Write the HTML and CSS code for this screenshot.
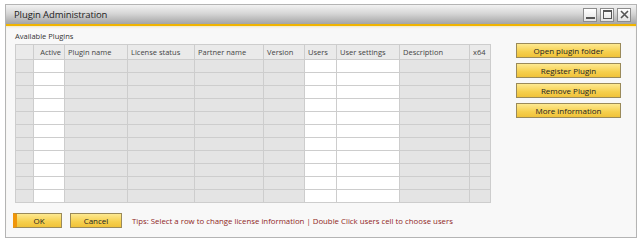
FILE: index.html
```html
<!DOCTYPE html>
<html lang="en">
<head>
  <meta charset="UTF-8">
  <title>Plugin Administration</title>
  <link rel="stylesheet" href="styles.css">
</head>
<body>
  <div class="window">
    <div class="titlebar">
      <span class="title">Plugin Administration</span>
      <div class="controls">
        <span class="ctl"><svg width="11" height="11" viewBox="0 0 11 11"><rect x="1" y="8" width="9" height="2" fill="#555"/></svg></span>
        <span class="ctl"><svg width="11" height="11" viewBox="0 0 11 11"><rect x="1.5" y="1.5" width="8" height="8" fill="none" stroke="#555"/><rect x="1" y="1" width="9" height="2" fill="#555"/></svg></span>
        <span class="ctl"><svg width="11" height="11" viewBox="0 0 11 11"><path d="M2 2 L9 9 M9 2 L2 9" stroke="#555" stroke-width="1.6"/></svg></span>
      </div>
    </div>

    <div class="content">
      <div class="main">
        <div class="plugins">
          <div class="label">Available Plugins</div>
          <table class="grid">
            <colgroup>
              <col class="c-hdr">
              <col class="c-active rw">
              <col class="c-name">
              <col class="c-lic">
              <col class="c-partner">
              <col class="c-ver">
              <col class="c-users rw">
              <col class="c-settings rw">
              <col class="c-desc">
              <col class="c-x64">
            </colgroup>
            <thead>
              <tr>
                <th></th>
                <th class="right">Active</th>
                <th>Plugin name</th>
                <th>License status</th>
                <th>Partner name</th>
                <th>Version</th>
                <th>Users</th>
                <th>User settings</th>
                <th>Description</th>
                <th>x64</th>
              </tr>
            </thead>
            <tbody>
              <tr><td></td><td></td><td></td><td></td><td></td><td></td><td></td><td></td><td></td><td></td></tr>
              <tr><td></td><td></td><td></td><td></td><td></td><td></td><td></td><td></td><td></td><td></td></tr>
              <tr><td></td><td></td><td></td><td></td><td></td><td></td><td></td><td></td><td></td><td></td></tr>
              <tr><td></td><td></td><td></td><td></td><td></td><td></td><td></td><td></td><td></td><td></td></tr>
              <tr><td></td><td></td><td></td><td></td><td></td><td></td><td></td><td></td><td></td><td></td></tr>
              <tr><td></td><td></td><td></td><td></td><td></td><td></td><td></td><td></td><td></td><td></td></tr>
              <tr><td></td><td></td><td></td><td></td><td></td><td></td><td></td><td></td><td></td><td></td></tr>
              <tr><td></td><td></td><td></td><td></td><td></td><td></td><td></td><td></td><td></td><td></td></tr>
              <tr><td></td><td></td><td></td><td></td><td></td><td></td><td></td><td></td><td></td><td></td></tr>
              <tr><td></td><td></td><td></td><td></td><td></td><td></td><td></td><td></td><td></td><td></td></tr>
              <tr><td></td><td></td><td></td><td></td><td></td><td></td><td></td><td></td><td></td><td></td></tr>
            </tbody>
          </table>
        </div>

        <div class="actions">
          <button class="btn">Open plugin folder</button>
          <button class="btn">Register Plugin</button>
          <button class="btn">Remove Plugin</button>
          <button class="btn">More information</button>
        </div>
      </div>

      <div class="footer">
        <button class="btn btn-ok">OK</button>
        <button class="btn btn-cancel">Cancel</button>
        <span class="tips">Tips: Select a row to change license information | Double Click users cell to choose users</span>
      </div>
    </div>
  </div>
</body>
</html>
```

FILE: styles.css
```css
:root {
  --line: #cdcdcd;
  --cell: #e4e4e4;
  --gold: #f0b400;
  --text: #333;
}

html, body {
  margin: 0;
  background: #fff;
}

body {
  font-family: "Open Sans", "DejaVu Sans", sans-serif;
  color: var(--text);
}

.window {
  margin: 4px 5px;
  width: 632px;
  height: 234px;
  box-sizing: border-box;
  border: 1px solid #b4b4b4;
  background: #f8f8f8;
  display: flex;
  flex-direction: column;
}

.titlebar {
  height: 19px;
  border-bottom: 2px solid var(--gold);
  background: linear-gradient(#f2f2f2, #d6d6d6 45%, #a4a4a4);
  display: flex;
  align-items: center;
  justify-content: space-between;
  padding: 0 5px 0 8px;
}

.title {
  font-size: 9.5px;
  color: #222;
  letter-spacing: -0.1px;
}

.controls {
  display: flex;
  gap: 3px;
}

.ctl {
  width: 12px;
  height: 12px;
  border: 1px solid #8c8c8c;
  background: linear-gradient(#ffffff, #e2e2e2);
  display: flex;
  align-items: center;
  justify-content: center;
}

.content {
  padding: 4px 0 0 9px;
  box-shadow: inset 0 2px 3px -2px rgba(240, 180, 0, 0.5);
}

.main {
  display: flex;
  align-items: flex-start;
}

.label {
  font-size: 7.5px;
  line-height: 12px;
  margin-bottom: 2px;
}

.grid {
  border-collapse: collapse;
  table-layout: fixed;
  width: 475px;
  border: 1px solid #c4c4c4;
  background: var(--cell);
}

.grid th,
.grid td {
  border: 1px solid var(--line);
  padding: 0 3px;
  overflow: hidden;
  white-space: nowrap;
}

.grid th {
  height: 14px;
  font-size: 7.5px;
  font-weight: normal;
  text-align: left;
  background: #eaeaea;
  color: #444;
}

.grid th.right {
  text-align: right;
}

.grid td {
  height: 12px;
}

.grid col.rw {
  background: #fff;
}

.c-hdr { width: 18px; }
.c-active { width: 31px; }
.c-name { width: 63px; }
.c-lic { width: 67px; }
.c-partner { width: 69px; }
.c-ver { width: 41px; }
.c-users { width: 32px; }
.c-settings { width: 63px; }
.c-desc { width: 70px; }
.c-x64 { width: 21px; }

.actions {
  margin: 13px 0 0 25px;
  display: flex;
  flex-direction: column;
  gap: 5px;
}

.btn {
  font-family: "Open Sans", "DejaVu Sans", sans-serif;
  font-size: 8px;
  color: #222;
  height: 15px;
  width: 105px;
  padding: 0;
  border: 1px solid #9a8a5a;
  background: linear-gradient(#fde991, #f6cf4d 60%, #f0c23a);
  cursor: pointer;
}

.footer {
  display: flex;
  align-items: center;
  gap: 8px;
  margin: 10px 0 0 -2px;
}

.btn-ok {
  width: 49px;
  border-left: 4px solid #f0960a;
}

.btn-cancel {
  width: 52px;
}

.tips {
  margin-left: 2px;
  font-size: 7.8px;
  color: #8f1f24;
}
```
